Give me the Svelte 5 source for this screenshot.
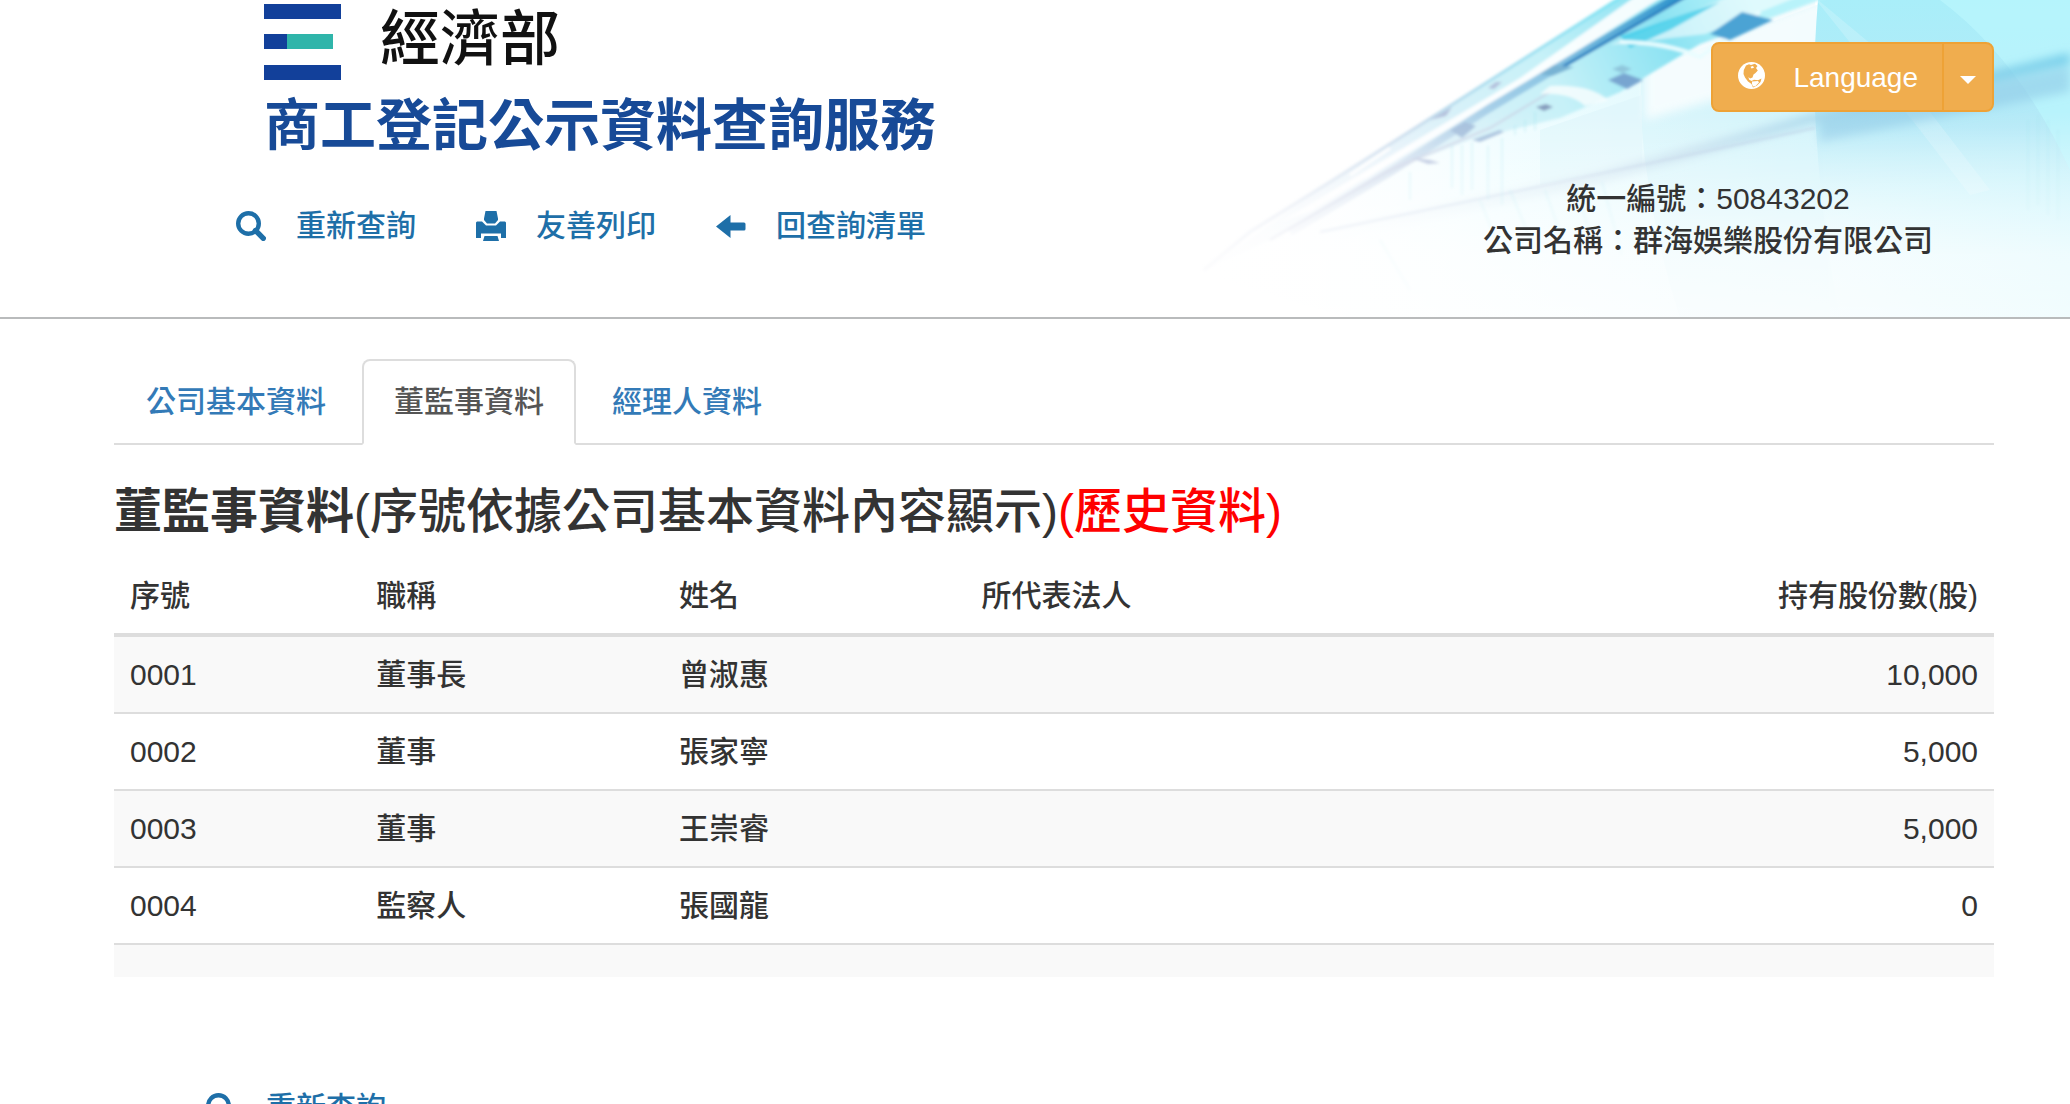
<script>
  const tabs = ['公司基本資料', '董監事資料', '經理人資料'];
  let active = $state(1);

  const rows = [
    { no: '0001', title: '董事長', name: '曾淑惠', entity: '', shares: '10,000' },
    { no: '0002', title: '董事', name: '張家寧', entity: '', shares: '5,000' },
    { no: '0003', title: '董事', name: '王崇睿', entity: '', shares: '5,000' },
    { no: '0004', title: '監察人', name: '張國龍', entity: '', shares: '0' }
  ];
</script>

{#snippet searchIcon()}
  <svg class="icon" viewBox="0 0 30 30" aria-hidden="true">
    <circle cx="12.5" cy="12.5" r="10.3" fill="none" stroke="currentColor" stroke-width="4.4" />
    <path d="M19.5 19.5 L27.3 27.3" stroke="currentColor" stroke-width="5.4" stroke-linecap="round" />
  </svg>
{/snippet}

<div class="page">
  <header>
    <svg class="art" viewBox="0 0 880 318" preserveAspectRatio="xMaxYMin slice" aria-hidden="true">
      <defs>
        <linearGradient id="tint" x1="0" y1="0" x2="1" y2="0">
          <stop offset="0" stop-color="#fff" stop-opacity="0" />
          <stop offset=".35" stop-color="#e8fcff" stop-opacity=".7" />
          <stop offset=".7" stop-color="#d6f6fc" />
          <stop offset="1" stop-color="#a6effb" />
        </linearGradient>
        <linearGradient id="beam" gradientUnits="userSpaceOnUse" x1="20" y1="268" x2="560" y2="0">
          <stop offset="0" stop-color="#f2f4fa" stop-opacity=".2" />
          <stop offset=".35" stop-color="#e4f1f9" />
          <stop offset=".65" stop-color="#c6f1f8" />
          <stop offset=".85" stop-color="#8be2f2" />
          <stop offset="1" stop-color="#b8f3fa" />
        </linearGradient>
        <linearGradient id="edge" gradientUnits="userSpaceOnUse" x1="20" y1="268" x2="500" y2="0">
          <stop offset="0" stop-color="#e6e9f3" stop-opacity=".1" />
          <stop offset=".4" stop-color="#cfdeee" />
          <stop offset=".7" stop-color="#8ec6e4" />
          <stop offset="1" stop-color="#2b93cc" />
        </linearGradient>
        <linearGradient id="rim" gradientUnits="userSpaceOnUse" x1="20" y1="268" x2="440" y2="0">
          <stop offset="0" stop-color="#d9dcea" stop-opacity=".5" />
          <stop offset=".5" stop-color="#c4d9eb" />
          <stop offset="1" stop-color="#7ce4f4" />
        </linearGradient>
        <linearGradient id="pane" x1="0" y1="0" x2="0" y2="1">
          <stop offset="0" stop-color="#a9eef9" />
          <stop offset=".4" stop-color="#b4e9f7" />
          <stop offset=".65" stop-color="#d6f6fc" stop-opacity=".6" />
          <stop offset="1" stop-color="#fff" stop-opacity="0" />
        </linearGradient>
        <linearGradient id="ray" gradientUnits="userSpaceOnUse" x1="120" y1="230" x2="880" y2="80">
          <stop offset="0" stop-color="#dfe8f3" stop-opacity="0" />
          <stop offset=".5" stop-color="#b9d5e8" stop-opacity=".8" />
          <stop offset="1" stop-color="#72cbe8" />
        </linearGradient>
        <linearGradient id="fade" x1="0" y1="0" x2="0" y2="1">
          <stop offset=".35" stop-color="#fff" stop-opacity="0" />
          <stop offset=".8" stop-color="#fff" stop-opacity=".75" />
          <stop offset="1" stop-color="#fff" stop-opacity=".85" />
        </linearGradient>
        <filter id="soft"><feGaussianBlur stdDeviation="1.5" /></filter>
        <filter id="softer"><feGaussianBlur stdDeviation="5" /></filter>
      </defs>
      <path d="M10 275 L140 190 L300 125 L520 45 L640 0 H880 V318 H160 Z" fill="url(#tint)" />
      <path d="M452 60 Q448 120 458 180 Q468 250 490 318 H640 L625 0 Z" fill="#cdf2fa" opacity=".5" />
      <path d="M350 130 V185 L452 165 V95 Z" fill="#e0f6fb" opacity=".8" />
      <path d="M510 43 L640 -4 L625 70 L455 120 V60 Z" fill="#fff" opacity=".75" filter="url(#softer)" />
      <path d="M628 0 Q622 70 626 130 Q632 230 650 318 H880 V0 Z" fill="url(#pane)" />
      <path d="M750 0 Q830 60 880 170 V0 Z" fill="#baf7fd" opacity=".7" />
      <path d="M628 0 L700 60 L800 190 L780 195 L730 130 L626 0 Z" fill="#fff" opacity=".18" />
      <g filter="url(#softer)">
        <path d="M630 120 L880 66 V92 L630 142 Z" fill="#8fc9e6" opacity=".6" />
        <path d="M130 235 L400 180 L625 118 L880 58" fill="none" stroke="url(#ray)" stroke-width="9" />
      </g>
      <path d="M130 232 L400 176 L625 128" fill="none" stroke="#aebfdd" stroke-width="2" opacity=".5" filter="url(#soft)" />
      <g filter="url(#soft)">
        <path d="M15 270 L140 182 L260 105 L430 -4 H640 L510 44 L430 92 L370 118 L280 140 L215 165 L80 240 Z" fill="url(#beam)" />
        <path d="M90 222 L240 132 L330 78 L446 -4 H474 L370 62 L240 140 L120 212 Z" fill="#fff" opacity=".9" />
        <path d="M14 270 L60 232 L140 182 L230 125 L340 55 L430 -2" fill="none" stroke="url(#rim)" stroke-width="3" />
        <path d="M100 232 L200 172 L300 108 L400 48 L492 -6" fill="none" stroke="url(#edge)" stroke-width="8" />
        <path d="M360 74 L430 34 L500 -6" fill="none" stroke="#267fc0" stroke-width="3" />
        <path d="M80 240 L200 170 L300 128 L360 92" fill="none" stroke="#c8cbe0" stroke-width="2" opacity=".7" />
        <path d="M420 45 L540 -4 H610 L515 34 Z" fill="#fff" opacity=".55" />
        <path d="M430 36 L530 2 L480 30 L440 48 Z" fill="#3fcce8" opacity=".8" />
        <path d="M430 42 Q475 42 510 57 L570 12" fill="none" stroke="#e9fdff" stroke-width="4" />
        <path d="M520 34 L552 12 L583 20 L540 40 Z" fill="#4ba3d4" />
        <path d="M418 80 L434 73 L453 80 L437 89 Z" fill="#78a5d0" />
        <path d="M422 69 L432 65 L442 69 L432 73 Z" fill="#8fc6dc" />
        <path d="M350 74 L364 65 L384 67 L362 76 Z" fill="#78b3d4" />
        <path d="M346 107 L356 104 L363 107 L354 111 Z" fill="#869dbd" />
        <path d="M360 86 Q400 84 418 100 L395 106 Q380 92 350 94 Z" fill="#fff" opacity=".75" />
        <path d="M260 130 L275 122 L286 126 L272 138 Z M282 140 L310 130 L314 132 L290 142 Z" fill="#a3bedb" />
        <path d="M298 88 L306 82 L312 82 L304 89 Z M240 120 L262 107 L256 116 Z M222 158 L240 160 L250 163 L238 164 Z" fill="#b3c0dc" />
        <path d="M160 175 L200 148 M175 178 L222 146 M140 196 L190 165" stroke="#fff" stroke-width="3" />
      </g>
      <g stroke="#9fe3ef" stroke-width="2" opacity=".3" filter="url(#soft)">
        <path d="M262 145 V188 M272 145 V195 M282 142 V190 M298 146 V200 M312 138 V205 M325 125 V135 M335 120 V132 M345 112 V130 M220 172 V200" />
        <path d="M290 200 L310 250 M320 190 L345 250 M355 190 L378 255 M385 186 L405 250 M412 182 L432 255 M190 240 L220 290" />
        <path d="M838 120 V210 M848 115 V205 M858 120 V215 M868 130 V220" />
      </g>
      <rect width="880" height="318" fill="url(#fade)" />
    </svg>

    <div class="brand">
      <div class="ministry">
        <svg class="mark" viewBox="0 0 77 76" aria-hidden="true">
          <path d="M0 0H77V15H0Z M0 30H23V45H0Z M0 61H77V76H0Z" fill="#12409a" />
          <path d="M23 30H69V45H23Z" fill="#2fb5aa" />
        </svg>
        <span>經濟部</span>
      </div>
      <h1>商工登記公示資料查詢服務</h1>
      <nav class="actions">
        <a href="#search">{@render searchIcon()}重新查詢</a>
        <a href="#print">
          <svg class="icon" viewBox="0 0 30 30" aria-hidden="true">
            <path fill="currentColor" d="M9.5 0H20.5L22 7.5V9L19 12.5H11L8 9V7.5Z M1 10.5H6L10 14.5H20L24 10.5H29L30 11.5V27H25V22.5H5V27H0V11.5Z M8.5 25H21.5L23 30H7Z" />
          </svg>友善列印
        </a>
        <a href="#list">
          <svg class="icon" viewBox="0 0 30 30" aria-hidden="true">
            <path fill="currentColor" d="M0 15.500L14.500 4V11.500H28Q29.500 11.500 29.500 13V18Q29.500 19.500 28 19.500H14.500V27Z" />
          </svg>回查詢清單
        </a>
      </nav>
    </div>

    <div class="side">
      <div class="language">
        <button type="button" class="main">
          <svg class="globe" viewBox="0 0 27 27" aria-hidden="true">
            <circle cx="13.500" cy="13.500" r="13.500" fill="#fff" />
            <path fill="#f0ad4e" d="M8 3.500L11 2.200L13 3L17 1.800L19.500 4L18 6L19.800 8.500L17.500 11L15.500 12.500L14.500 15.500L12 16.500L10.500 15L11 17.500L13.500 19L16 17.800L20 18.200L23.500 16.500L22.500 20L19 23.500L15 25.500L13.500 22L10 19.500L7 15.500L5.500 12L5.800 8Z" />
            <path fill="#fff" d="M12.500 4.800L15 4L16 5.800L13.500 6.500Z M14 19.500L20 19L21 20.500L17.500 24L15 24.500L14 22Z" />
          </svg>
          Language
        </button>
        <button type="button" class="toggle" aria-label="Language">
          <svg class="caret" viewBox="0 0 16 8" aria-hidden="true"><path d="M0 0H16L8 8Z" fill="#fff" /></svg>
        </button>
      </div>
      <div class="company">
        <div>統一編號：50843202</div>
        <div>公司名稱：群海娛樂股份有限公司</div>
      </div>
    </div>
  </header>

  <main>
    <div class="tabs" role="tablist">
      {#each tabs as tab, i}
        <button type="button" role="tab" aria-selected={i === active} class:active={i === active} onclick={() => (active = i)}>{tab}</button>
      {/each}
    </div>

    <h2><b>董監事資料</b>(序號依據公司基本資料內容顯示)<span class="history">(歷史資料)</span></h2>

    <table>
      <thead>
        <tr>
          <th class="no">序號</th>
          <th class="mid">職稱</th>
          <th class="mid">姓名</th>
          <th>所代表法人</th>
          <th class="shares">持有股份數(股)</th>
        </tr>
      </thead>
      <tbody>
        {#each rows as row}
          <tr>
            <td>{row.no}</td>
            <td>{row.title}</td>
            <td>{row.name}</td>
            <td>{row.entity}</td>
            <td class="shares">{row.shares}</td>
          </tr>
        {/each}
        <tr class="end"><td colspan="5"></td></tr>
      </tbody>
    </table>

    <nav class="actions bottom">
      <a href="#search">{@render searchIcon()}重新查詢</a>
    </nav>
  </main>
</div>

<style>
  :global(body) {
    background: #fff;
  }
  .page {
    height: 100vh;
    overflow: hidden;
    box-sizing: border-box;
    font-family: 'Liberation Sans', 'Noto Sans CJK TC', sans-serif;
    font-size: 30px;
    font-weight: 500;
    line-height: 43px;
    color: #333;
  }
  .page * {
    box-sizing: border-box;
  }
  header {
    position: relative;
    display: flex;
    justify-content: space-between;
    padding: 4px 76px 70px 236px;
    border-bottom: 2px solid #b9bbbc;
  }
  .art {
    position: absolute;
    top: 0;
    right: 0;
    width: 880px;
    height: 100%;
  }
  .brand,
  .side {
    position: relative;
  }
  .ministry {
    display: flex;
    align-items: center;
    gap: 39px;
    height: 76px;
    padding-left: 28px;
    font-size: 60px;
    line-height: 60px;
    color: #111;
  }
  .mark {
    width: 77px;
    height: 76px;
  }
  .ministry span {
    margin-top: -4px;
  }
  h1 {
    margin: 16px 0 0;
    padding-left: 28px;
    font-size: 56px;
    line-height: 60px;
    font-weight: 700;
    color: #174a97;
  }
  .actions {
    display: flex;
    gap: 60px;
    margin-top: 48px;
  }
  .actions a {
    display: flex;
    align-items: center;
    gap: 30px;
    color: #1e6fa8;
    text-decoration: none;
  }
  .icon {
    width: 30px;
    height: 30px;
  }
  .side {
    display: flex;
    flex-direction: column;
    align-items: flex-end;
    padding-top: 38px;
    margin-bottom: -16px;
  }
  .language {
    display: flex;
    height: 70px;
  }
  .language button {
    display: flex;
    align-items: center;
    border: 2px solid #eea236;
    background: #f0ad4e;
    color: #fff;
    font: inherit;
    font-size: 28px;
    cursor: pointer;
  }
  .main {
    gap: 28px;
    padding: 0 24px 0 25px;
    border-radius: 8px 0 0 8px;
  }
  .globe {
    width: 27px;
    height: 27px;
    margin-bottom: 4px;
  }
  .toggle {
    margin-left: -2px;
    padding: 6px 16px 0;
    border-radius: 0 8px 8px 0;
  }
  .caret {
    width: 16px;
    height: 8px;
  }
  .company {
    margin-top: 66px;
    padding-right: 61px;
    line-height: 42px;
    text-align: center;
  }
  main {
    padding: 40px 76px 0 114px;
  }
  .tabs {
    display: flex;
    gap: 4px;
    border-bottom: 2px solid #ddd;
  }
  .tabs button {
    margin-bottom: -2px;
    padding: 20px 30px;
    border: 2px solid transparent;
    border-radius: 8px 8px 0 0;
    background: none;
    color: #337ab7;
    font: inherit;
    line-height: 42px;
    cursor: pointer;
  }
  .tabs button.active {
    border-color: #ddd;
    border-bottom-color: #fff;
    background: #fff;
    color: #555;
  }
  h2 {
    margin: 40px 0 20px;
    font-size: 48px;
    line-height: 53px;
    font-weight: 500;
  }
  .history {
    color: #f00;
  }
  table {
    width: 100%;
    border-collapse: separate;
    border-spacing: 0;
    table-layout: fixed;
  }
  th,
  td {
    padding: 16px;
    text-align: left;
  }
  th {
    border-bottom: 4px solid #ddd;
    font-weight: 500;
  }
  td {
    border-bottom: 2px solid #ddd;
  }
  .no {
    width: 13.1%;
  }
  .mid {
    width: 16.1%;
  }
  .shares {
    text-align: right;
  }
  tbody tr:nth-child(odd) {
    background: #f9f9f9;
  }
  .end td {
    border-bottom: 0;
  }
  .bottom {
    margin-top: 109px;
    padding-left: 92px;
  }
</style>
